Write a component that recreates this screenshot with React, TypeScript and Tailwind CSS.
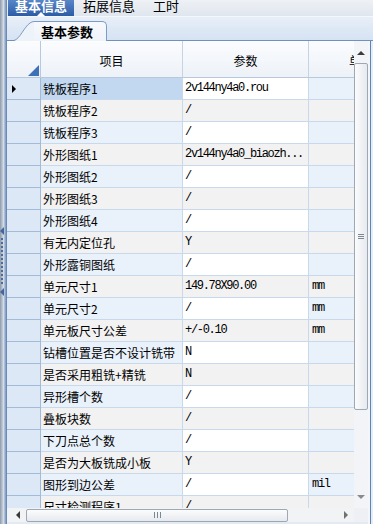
const rows: [string, string, string][] = [
  ["铣板程序1", "2v144ny4a0.rou", ""],
  ["铣板程序2", "/", ""],
  ["铣板程序3", "/", ""],
  ["外形图纸1", "2v144ny4a0_biaozh...", ""],
  ["外形图纸2", "/", ""],
  ["外形图纸3", "/", ""],
  ["外形图纸4", "/", ""],
  ["有无内定位孔", "Y", ""],
  ["外形露铜图纸", "/", ""],
  ["单元尺寸1", "149.78X90.00", "mm"],
  ["单元尺寸2", "/", "mm"],
  ["单元板尺寸公差", "+/-0.10", "mm"],
  ["钻槽位置是否不设计铣带", "N", ""],
  ["是否采用粗铣+精铣", "N", ""],
  ["异形槽个数", "/", ""],
  ["叠板块数", "/", ""],
  ["下刀点总个数", "/", ""],
  ["是否为大板铣成小板", "Y", ""],
  ["图形到边公差", "/", "mil"],
  ["尺寸检测程序1", "/", ""],
];

const mono = "font-['Liberation_Mono',monospace] text-[12px] tracking-[-1.3px]";

function Splitter() {
  return (
    <div className="flex w-[7px] shrink-0 flex-col items-start bg-gradient-to-r from-[#8d9aab] via-[#d3dbe5] to-[#5a7db0] pt-[227px]">
      <div className="h-0 w-0 border-y-[4px] border-r-[4px] border-y-transparent border-r-[#46679a]" />
      <div className="ml-[1px] mt-[3px] h-[46px] w-[2px] bg-[repeating-linear-gradient(to_bottom,#4a6c9c_0px,#4a6c9c_2px,transparent_2px,transparent_4px)]" />
      <div className="mt-[4px] h-0 w-0 border-y-[4px] border-r-[4px] border-y-transparent border-r-[#46679a]" />
    </div>
  );
}

function TopTabs() {
  return (
    <div className="flex h-[17px] shrink-0 items-start overflow-hidden border-b border-[#f5f8fb] bg-gradient-to-b from-[#eef1f5] to-[#e0e6ee] text-[13px]">
      <div className="relative ml-[1px] flex h-[16px] w-[66px] items-start justify-center bg-gradient-to-b from-[#5886c8] to-[#2d5ca7]">
        <span className="-mt-[3px] font-bold leading-[18px] text-white">基本信息</span>
        <div className="absolute bottom-0 left-[29px] h-0 w-0 border-x-[4px] border-b-[4px] border-x-transparent border-b-white" />
      </div>
      <span className="-mt-[3px] ml-[9px] leading-[18px] text-black">拓展信息</span>
      <span className="-mt-[3px] ml-[18px] leading-[18px] text-black">工时</span>
    </div>
  );
}

function SubTabs() {
  return (
    <div className="flex h-[24px] shrink-0 items-end border-b border-[#6f91c0] bg-gradient-to-b from-[#e7eef8] to-[#d6e3f3] pl-[7px]">
      <svg width="20" height="20" viewBox="0 0 20 20" className="-mb-px block">
        <path d="M0 20 C6 18 10 6 16 2 Q18 0.5 20 0.5 L20 20 Z" fill="#eef3fa" />
        <path d="M0 19.5 C6 18 10 6 16 2 Q18 0.5 20 0.5" fill="none" stroke="#7d9cc5" strokeWidth="1" />
      </svg>
      <div className="-mb-px flex h-[20px] w-[73px] items-center justify-center rounded-tr-[5px] border-r border-t border-[#7d9cc5] bg-gradient-to-b from-[#f7f9fd] to-[#eef3fa] pr-[6px] text-[13px] font-bold leading-[18px] text-black">
        基本参数
      </div>
    </div>
  );
}

function HeaderRow() {
  return (
    <div className="flex h-[37px] shrink-0 border-b border-[#b9c9dd] bg-gradient-to-b from-[#fbfcfe] to-[#edf2f8] text-[12px] text-black">
      <div className="flex w-[34px] shrink-0 items-end justify-end border-r border-[#b9c9dd] pb-[1px] pr-[1px]">
        <svg width="11" height="11" viewBox="0 0 11 11" className="block">
          <path d="M11 0 L11 11 L0 11 Z" fill="#3d70b7" />
        </svg>
      </div>
      <div className="flex w-[142px] shrink-0 items-center justify-center border-r border-[#c6d3e3] pt-[4px]">项目</div>
      <div className="flex w-[126px] shrink-0 items-center justify-center border-r border-[#c6d3e3] pt-[4px]">参数</div>
      <div className="flex w-[104px] shrink-0 items-center justify-center pt-[4px]">单位</div>
    </div>
  );
}

function DataRow({ r, i }: { r: [string, string, string]; i: number }) {
  const white = i % 2 === 0;
  const itemBg = i === 0 ? "bg-[#c2d8f1]" : white ? "bg-[#e9f1fb]" : "bg-[#f2f2f2]";
  const valBg = white ? "bg-white" : "bg-[#f2f2f2]";
  const unitBg = white ? "bg-[#e9f1fb]" : "bg-[#f2f2f2]";
  return (
    <div className="flex h-[22px] shrink-0 text-[12px] leading-[21px] text-black">
      <div className="flex w-[34px] shrink-0 items-center border-b border-r border-[#a3bbd8] bg-[#dde8f6] pl-[5px]">
        {i === 0 && <div className="h-0 w-0 border-y-[4px] border-l-[4px] border-y-transparent border-l-black" />}
      </div>
      <div className={`w-[142px] shrink-0 overflow-hidden whitespace-nowrap border-b border-r border-[#c9d9ec] pl-[2px] ${itemBg}`}>
        {r[0]}
      </div>
      <div className={`w-[126px] shrink-0 overflow-hidden whitespace-nowrap border-b border-r border-[#c9d9ec] pl-[2px] ${valBg} ${mono}`}>
        {r[1]}
      </div>
      <div className={`w-[104px] shrink-0 whitespace-nowrap border-b border-[#c9d9ec] pl-[3px] ${unitBg} ${mono}`}>
        {r[2]}
      </div>
    </div>
  );
}

function VScroll() {
  return (
    <div className="flex w-[14px] shrink-0 flex-col items-stretch bg-[#f2f4f7]">
      <div className="flex h-[22px] items-center justify-center pt-[2px]">
        <div className="h-0 w-0 border-x-[4px] border-b-[4px] border-x-transparent border-b-[#3c3c3c]" />
      </div>
      <div className="flex h-[347px] items-center justify-center rounded-[2px] border border-[#9ea8b3] bg-gradient-to-r from-[#fbfcfd] to-[#e6e9ee]">
        <div className="flex w-[6px] flex-col gap-[1px]">
          <div className="h-px bg-[#7d8792]" />
          <div className="h-px bg-[#7d8792]" />
          <div className="h-px bg-[#7d8792]" />
        </div>
      </div>
      <div className="flex flex-1 items-end justify-center pb-[9px]">
        <div className="h-0 w-0 border-x-[4px] border-t-[4px] border-x-transparent border-t-[#8a8a8a]" />
      </div>
    </div>
  );
}

function HScroll() {
  return (
    <div className="flex h-[14px] shrink-0">
      <div className="flex w-[347px] items-center bg-[#f2f3f5]">
        <div className="ml-[9px] h-0 w-0 border-y-[4px] border-r-[4px] border-y-transparent border-r-[#3a3a3a]" />
        <div className="ml-[6px] flex h-[13px] w-[262px] items-center justify-center gap-[2px] rounded-[2px] border border-[#9ea8b3] bg-gradient-to-b from-[#fbfcfd] to-[#e6e9ee]">
          <div className="h-[6px] w-px bg-[#7d8792]" />
          <div className="h-[6px] w-px bg-[#7d8792]" />
          <div className="h-[6px] w-px bg-[#7d8792]" />
        </div>
        <div className="ml-[56px] h-0 w-0 border-y-[4px] border-l-[4px] border-y-transparent border-l-[#707070]" />
      </div>
      <div className="w-[14px] bg-[#eef0f3]" />
    </div>
  );
}

export default function App() {
  return (
    <div className="flex h-[524px] w-[373px] overflow-hidden bg-[#e3eaf3] font-['Noto_Sans_CJK_SC','Noto_Sans',sans-serif]">
      <Splitter />
      <div className="flex min-w-0 flex-1 flex-col">
        <TopTabs />
        <SubTabs />
        <div className="flex min-h-0 flex-1">
          <div className="flex min-w-0 flex-1 flex-col">
            <div className="flex h-[467px] shrink-0">
              <div className="flex w-[347px] shrink-0 flex-col overflow-hidden bg-white">
                <HeaderRow />
                {rows.map((r, i) => (
                  <DataRow key={i} r={r} i={i} />
                ))}
              </div>
              <VScroll />
            </div>
            <HScroll />
          </div>
          <div className="w-[2px] shrink-0 bg-[#f3f6fa]" />
          <div className="w-px shrink-0 bg-[#5d82b6]" />
          <div className="w-[2px] shrink-0 bg-[#e6edf6]" />
        </div>
      </div>
    </div>
  );
}
